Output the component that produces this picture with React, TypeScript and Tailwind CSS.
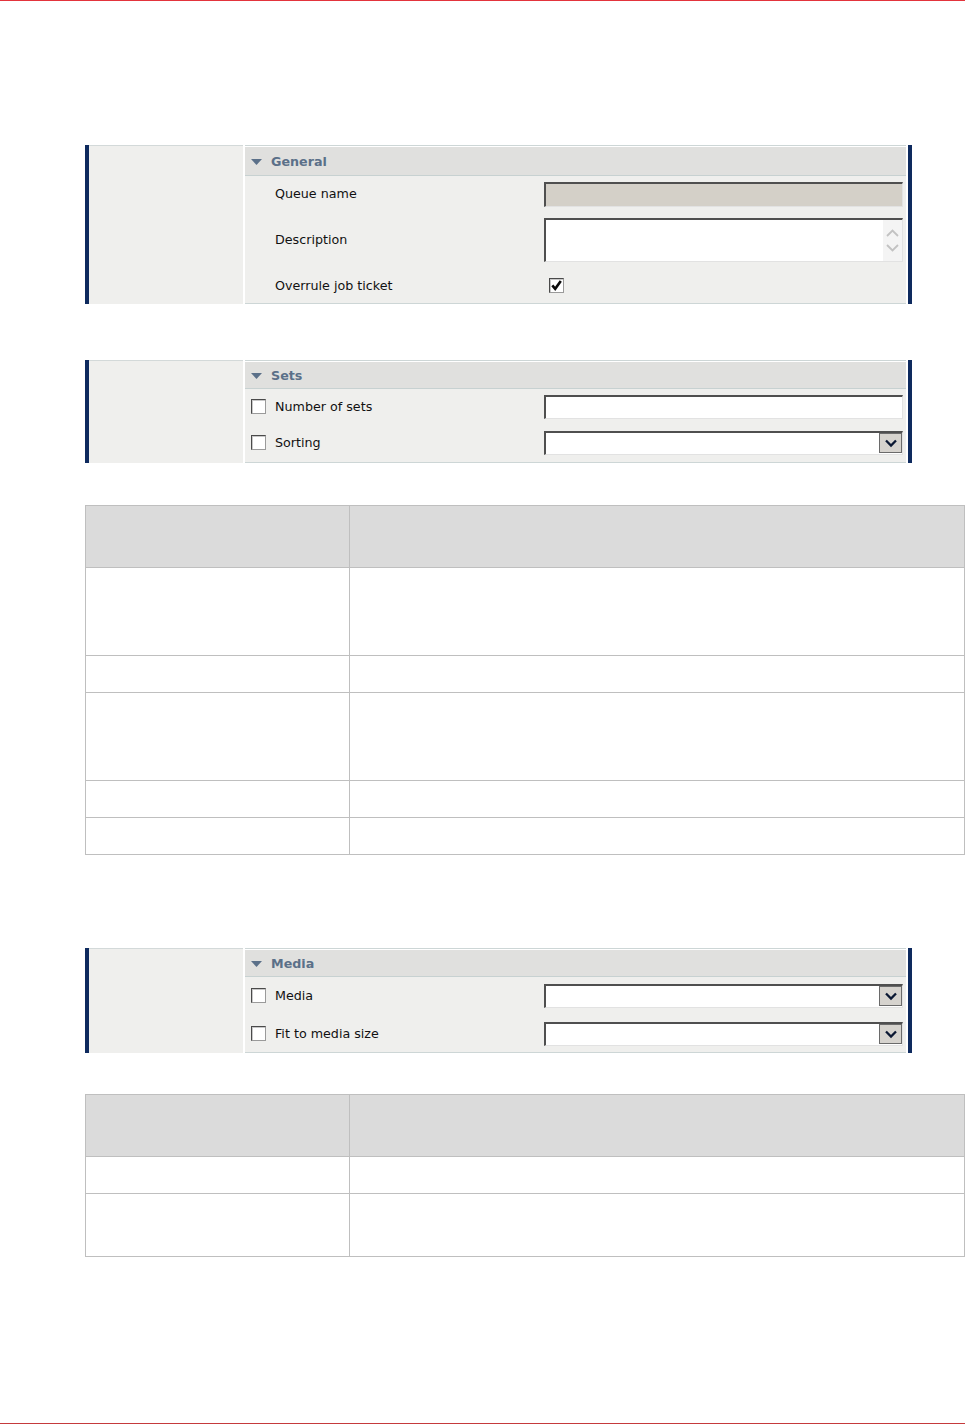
const FONT = { fontFamily: '"DejaVu Sans", Verdana, sans-serif' };

const Triangle = () => (
  <svg width="11" height="6" viewBox="0 0 11 6" className="mr-[9px]">
    <polygon points="0,0 11,0 5.5,6" fill="#5b7089" />
  </svg>
);

const CheckBox = ({ checked = false }: { checked?: boolean }) => (
  <div className="relative w-[15px] h-[15px] bg-white border border-t-[#4a4a4a] border-l-[#4a4a4a] border-r-[#9a9a9a] border-b-[#9a9a9a] shadow-[inset_1px_1px_0_#c8c8c8]">
    {checked && (
      <svg width="13" height="13" viewBox="0 0 13 13" className="absolute left-0 top-0">
        <polyline
          points="2.3,6.3 5.2,9.8 10.8,2"
          fill="none"
          stroke="#0a0a0a"
          strokeWidth="2.6"
        />
      </svg>
    )}
  </div>
);

const inset =
  "border-2 border-t-[#4f4f4f] border-l-[#4f4f4f] border-r-[#e2e2e2] border-b-[#e2e2e2]";

const TextInput = ({ disabled = false }: { disabled?: boolean }) => (
  <div
    className={`w-[359px] ${disabled ? "h-[25px] bg-[#d4d0c8]" : "h-[24px] bg-white"} ${inset} border-b border-r`}
  />
);

const TextArea = () => (
  <div className={`w-[359px] h-[44px] bg-white ${inset} border-b border-r flex justify-end`}>
    <div className="w-[19px] h-full bg-[#f4f4f4] flex flex-col items-center justify-center gap-[7px]">
      <svg width="13" height="8" viewBox="0 0 13 8">
        <polyline points="1,7 6.5,1.5 12,7" fill="none" stroke="#c2c2c2" strokeWidth="1.8" />
      </svg>
      <svg width="13" height="8" viewBox="0 0 13 8">
        <polyline points="1,1 6.5,6.5 12,1" fill="none" stroke="#c2c2c2" strokeWidth="1.8" />
      </svg>
    </div>
  </div>
);

const Select = () => (
  <div className={`w-[359px] h-[24px] bg-white ${inset} border-b border-r flex justify-end`}>
    <div className="w-[23px] h-[20px] bg-[#d6d3ce] border border-[#6a6a6a] flex items-center justify-center">
      <svg width="14" height="10" viewBox="0 0 14 10">
        <polyline points="2,2.5 7,7.5 12,2.5" fill="none" stroke="#0b1833" strokeWidth="2.3" />
      </svg>
    </div>
  </div>
);

type Row = {
  label: string;
  height: number;
  box?: boolean;
  field: React.ReactNode;
};

const Panel = ({
  title,
  headerH,
  rows,
}: {
  title: string;
  headerH: number;
  rows: Row[];
}) => (
  <div className="ml-[85px] mr-[53px] flex">
    <div className="w-1 bg-[#0e2a5e]" />
    <div className="w-[154px] bg-[#efefed] border-t border-[#d3d9d9]" />
    <div className="w-[2px]" />
    <div className="flex-1 flex flex-col bg-[#efefed] border-t border-b border-[#cdd6d6]">
      <div className="h-px bg-white" />
      <div
        className="flex items-center pl-[6px] pt-px bg-[#e0e0de] border-b border-[#c7d1d1] font-bold text-[#5b7089] text-[12.7px]"
        style={{ height: headerH }}
      >
        <Triangle />
        {title}
      </div>
      {rows.map((r) => (
        <div key={r.label} className="flex items-center" style={{ height: r.height }}>
          <div className="w-[299px] flex items-center pl-[6px] text-[12.7px] text-[#111111]">
            <div className="w-[24px]">{r.box && <CheckBox />}</div>
            {r.label}
          </div>
          {r.field}
        </div>
      ))}
    </div>
    <div className="w-[2px]" />
    <div className="w-1 bg-[#0e2a5e]" />
  </div>
);

const Table = ({ rows }: { rows: number[] }) => (
  <div className="ml-[85px] w-[880px] border-t border-l border-r border-[#bfbfbf]">
    <div className="flex h-[62px] bg-[#dbdbdb] border-b border-[#bfbfbf]">
      <div className="w-[264px] border-r border-[#bfbfbf]" />
      <div className="flex-1" />
    </div>
    {rows.map((h, i) => (
      <div key={i} className="flex border-b border-[#bfbfbf]" style={{ height: h }}>
        <div className="w-[264px] border-r border-[#bfbfbf]" />
        <div className="flex-1" />
      </div>
    ))}
  </div>
);

export default function App() {
  return (
    <div className="w-[965px] h-[1424px] bg-white flex flex-col" style={FONT}>
      <div className="h-px bg-[#e3343c]" />
      <div className="mt-[144px]">
        <Panel
          title="General"
          headerH={29}
          rows={[
            { label: "Queue name", height: 36, field: <TextInput disabled /> },
            { label: "Description", height: 56, field: <TextArea /> },
            {
              label: "Overrule job ticket",
              height: 35,
              field: (
                <div className="pl-[5px]">
                  <CheckBox checked />
                </div>
              ),
            },
          ]}
        />
      </div>
      <div className="mt-[56px]">
        <Panel
          title="Sets"
          headerH={27}
          rows={[
            { label: "Number of sets", height: 35, box: true, field: <TextInput /> },
            { label: "Sorting", height: 38, box: true, field: <Select /> },
          ]}
        />
      </div>
      <div className="mt-[42px]">
        <Table rows={[88, 37, 88, 37, 37]} />
      </div>
      <div className="mt-[93px]">
        <Panel
          title="Media"
          headerH={27}
          rows={[
            { label: "Media", height: 38, box: true, field: <Select /> },
            { label: "Fit to media size", height: 37, box: true, field: <Select /> },
          ]}
        />
      </div>
      <div className="mt-[41px]">
        <Table rows={[37, 63]} />
      </div>
      <div className="flex-1" />
      <div className="h-px bg-[#c53a3c]" />
    </div>
  );
}
